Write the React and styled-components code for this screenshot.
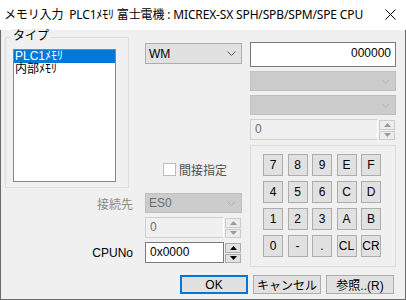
import styled, { createGlobalStyle } from "styled-components";

const GlobalStyle = createGlobalStyle`
  html, body {
    margin: 0;
    padding: 0;
    background: #f0f0f0;
  }
  body {
    font-family: "Liberation Sans", "Noto Sans CJK JP", sans-serif;
    font-size: 12px;
    color: #000;
  }
  * {
    box-sizing: border-box;
  }
`;

const Window = styled.div`
  width: 406px;
  height: 300px;
  display: flex;
  flex-direction: column;
  overflow: hidden;
`;

const TitleBar = styled.div`
  height: 30px;
  flex: none;
  background: #ffffff;
  display: flex;
  align-items: center;
  justify-content: space-between;
  padding: 0 10px 2px 4px;
  font-family: "Noto Sans", "Noto Sans CJK JP", sans-serif;
  font-size: 12px;
  letter-spacing: -0.15px;
  white-space: pre;
`;

const Body = styled.div`
  flex: 1;
  background: #f0f0f0;
  border: 1px solid #6b6b6b;
  border-top: none;
  padding: 0 9px 0 4px;
  display: flex;
  flex-direction: column;
`;

const MainRow = styled.div`
  display: flex;
  gap: 8px;
`;

const LeftCol = styled.div`
  width: 237px;
  display: flex;
  flex-direction: column;
`;

const TopSection = styled.div`
  display: flex;
  gap: 16px;
`;

const GroupBox = styled.div`
  position: relative;
  width: ${(p) => p.w}px;
  height: ${(p) => p.h}px;
  margin-top: ${(p) => p.mt || 0}px;
  border: 1px solid #dcdcdc;
  padding: ${(p) => p.pad};
`;

const GroupLabel = styled.span`
  position: absolute;
  top: -9px;
  left: 5px;
  padding: 0 2px;
  background: #f0f0f0;
  line-height: 14px;
`;

const ListBox = styled.div`
  width: 103px;
  height: 133px;
  background: #ffffff;
  border: 1px solid #828790;
`;

const ListItem = styled.div`
  height: 13px;
  line-height: 13px;
  padding-left: 1px;
  white-space: nowrap;
  background: ${(p) => (p.selected ? "#0078d7" : "transparent")};
  color: ${(p) => (p.selected ? "#ffffff" : "#000000")};
`;

const MidCol = styled.div`
  width: 97px;
  display: flex;
  flex-direction: column;
`;

const Combo = styled.div`
  width: ${(p) => p.w || 146}px;
  height: ${(p) => p.h || 20}px;
  margin-top: ${(p) => p.mt || 0}px;
  flex: none;
  display: flex;
  align-items: center;
  justify-content: space-between;
  padding: 0 5px 0 3px;
  background: ${(p) => (p.disabled ? "#cccccc" : "#e1e1e1")};
  border: 1px solid ${(p) => (p.disabled ? "#bfbfbf" : "#adadad")};
  color: ${(p) => (p.disabled ? "#6d6d6d" : "#000000")};
`;

const CheckRow = styled.label`
  display: flex;
  align-items: center;
  gap: 3px;
  height: 13px;
  margin-top: 99px;
  padding-left: 18px;
  color: #505050;
  white-space: nowrap;
`;

const CheckBox = styled.span`
  width: 13px;
  height: 13px;
  background: #ffffff;
  border: 1px solid #bcbcbc;
  flex: none;
`;

const FieldRow = styled.div`
  display: flex;
  align-items: center;
  height: ${(p) => p.h || 20}px;
  margin-top: ${(p) => p.mt || 0}px;
`;

const FieldLabel = styled.span`
  width: 128px;
  margin-right: 12px;
  text-align: right;
  color: ${(p) => (p.disabled ? "#8a8a8a" : "#000000")};
  white-space: nowrap;
`;

const Spin = styled.div`
  display: flex;
  gap: 1px;
  height: 21px;
  margin-top: ${(p) => p.mt || 0}px;
`;

const SpinInput = styled.div`
  width: ${(p) => p.w}px;
  height: 21px;
  padding: 2px 0 0 4px;
  background: ${(p) => (p.disabled ? "#f0f0f0" : "#ffffff")};
  border: 1px solid ${(p) => (p.disabled ? "#d0d0d0" : "#7a7a7a")};
  border-right-color: ${(p) => (p.disabled ? "#ffffff" : "#7a7a7a")};
  color: ${(p) => (p.disabled ? "#6d6d6d" : "#000000")};
`;

const SpinButtons = styled.div`
  width: 16px;
  display: flex;
  flex-direction: column;
  gap: 1px;
  padding-top: 1px;
`;

const SpinButton = styled.div`
  height: 9.5px;
  display: flex;
  align-items: center;
  justify-content: center;
  background: ${(p) => (p.disabled ? "#ececec" : "#e1e1e1")};
  border: 1px solid ${(p) => (p.disabled ? "#cccccc" : "#adadad")};
`;

const RightCol = styled.div`
  width: 146px;
  display: flex;
  flex-direction: column;
`;

const AddrInput = styled.div`
  height: 25px;
  margin-top: 12px;
  padding: 3px 4px 0 0;
  text-align: right;
  background: #ffffff;
  border: 1px solid #7a7a7a;
`;

const KeyGrid = styled.div`
  display: grid;
  grid-template-columns: repeat(5, 20px);
  grid-auto-rows: 22px;
  column-gap: 4.5px;
  row-gap: 5px;
`;

const Key = styled.div`
  display: flex;
  align-items: center;
  justify-content: center;
  background: #e1e1e1;
  border: 1px solid #adadad;
  white-space: nowrap;
`;

const Footer = styled.div`
  display: flex;
  justify-content: flex-end;
  gap: 5px;
  margin-top: 8px;
  margin-right: 2px;
`;

const DialogButton = styled.div`
  width: 68px;
  height: 19px;
  display: flex;
  align-items: center;
  justify-content: center;
  background: #e1e1e1;
  border: ${(p) => (p.primary ? "2px solid #0078d7" : "1px solid #adadad")};
  white-space: nowrap;
`;

const Chevron = ({ color }) => (
  <svg width="9" height="5" viewBox="0 0 9 5">
    <path d="M0.5 0.5 L4.5 4.5 L8.5 0.5" fill="none" stroke={color} strokeWidth="1" />
  </svg>
);

const Arrow = ({ down, color }) => (
  <svg width="7" height="4" viewBox="0 0 7 4">
    <path d={down ? "M0 0 H7 L3.5 4 Z" : "M0 4 H7 L3.5 0 Z"} fill={color} />
  </svg>
);

const SpinBox = ({ value, width, disabled, mt }) => {
  const arrow = disabled ? "#9a9a9a" : "#000000";
  return (
    <Spin mt={mt}>
      <SpinInput w={width} disabled={disabled}>{value}</SpinInput>
      <SpinButtons>
        <SpinButton disabled={disabled}><Arrow color={arrow} /></SpinButton>
        <SpinButton disabled={disabled}><Arrow down color={arrow} /></SpinButton>
      </SpinButtons>
    </Spin>
  );
};

const keys = ["7", "8", "9", "E", "F", "4", "5", "6", "C", "D", "1", "2", "3", "A", "B", "0", "-", ".", "CL", "CR"];

const App = () => {
  return (
    <>
      <GlobalStyle />
      <Window>
        <TitleBar>
          <span>メモリ入力  PLC1ﾒﾓﾘ 富士電機 : MICREX-SX SPH/SPB/SPM/SPE CPU</span>
          <svg width="11" height="11" viewBox="0 0 11 11">
            <path d="M0.5 0.5 L10.5 10.5 M10.5 0.5 L0.5 10.5" stroke="#000" strokeWidth="1" />
          </svg>
        </TitleBar>
        <Body>
          <MainRow>
            <LeftCol>
              <TopSection>
                <GroupBox w={124} h={151} mt={7} pad="11px 12px 5px 7px">
                  <GroupLabel>タイプ</GroupLabel>
                  <ListBox>
                    <ListItem selected>PLC1ﾒﾓﾘ</ListItem>
                    <ListItem>内部ﾒﾓﾘ</ListItem>
                  </ListBox>
                </GroupBox>
                <MidCol>
                  <Combo w={97} h={21} mt={13}>
                    <span>WM</span>
                    <Chevron color="#555555" />
                  </Combo>
                  <CheckRow>
                    <CheckBox />
                    <span>間接指定</span>
                  </CheckRow>
                </MidCol>
              </TopSection>
              <FieldRow mt={5}>
                <FieldLabel disabled>接続先</FieldLabel>
                <Combo w={97} disabled>
                  <span>ES0</span>
                  <Chevron color="#b0b0b0" />
                </Combo>
              </FieldRow>
              <FieldRow mt={4} h={21}>
                <FieldLabel />
                <SpinBox value="0" width={79} disabled />
              </FieldRow>
              <FieldRow mt={4} h={21}>
                <FieldLabel>CPUNo</FieldLabel>
                <SpinBox value="0x0000" width={79} />
              </FieldRow>
            </LeftCol>
            <RightCol>
              <AddrInput>000000</AddrInput>
              <Combo disabled mt={4}>
                <span />
                <Chevron color="#b0b0b0" />
              </Combo>
              <Combo disabled mt={4}>
                <span />
                <Chevron color="#b0b0b0" />
              </Combo>
              <SpinBox value="0" width={128} disabled mt={4} />
              <GroupBox w={146} h={122} mt={5} pad="8px 0 0 12px">
                <KeyGrid>
                  {keys.map((k) => (
                    <Key key={k}>{k}</Key>
                  ))}
                </KeyGrid>
              </GroupBox>
            </RightCol>
          </MainRow>
          <Footer>
            <DialogButton primary>OK</DialogButton>
            <DialogButton>キャンセル</DialogButton>
            <DialogButton>参照..(R)</DialogButton>
          </Footer>
        </Body>
      </Window>
    </>
  );
};

export default App;
